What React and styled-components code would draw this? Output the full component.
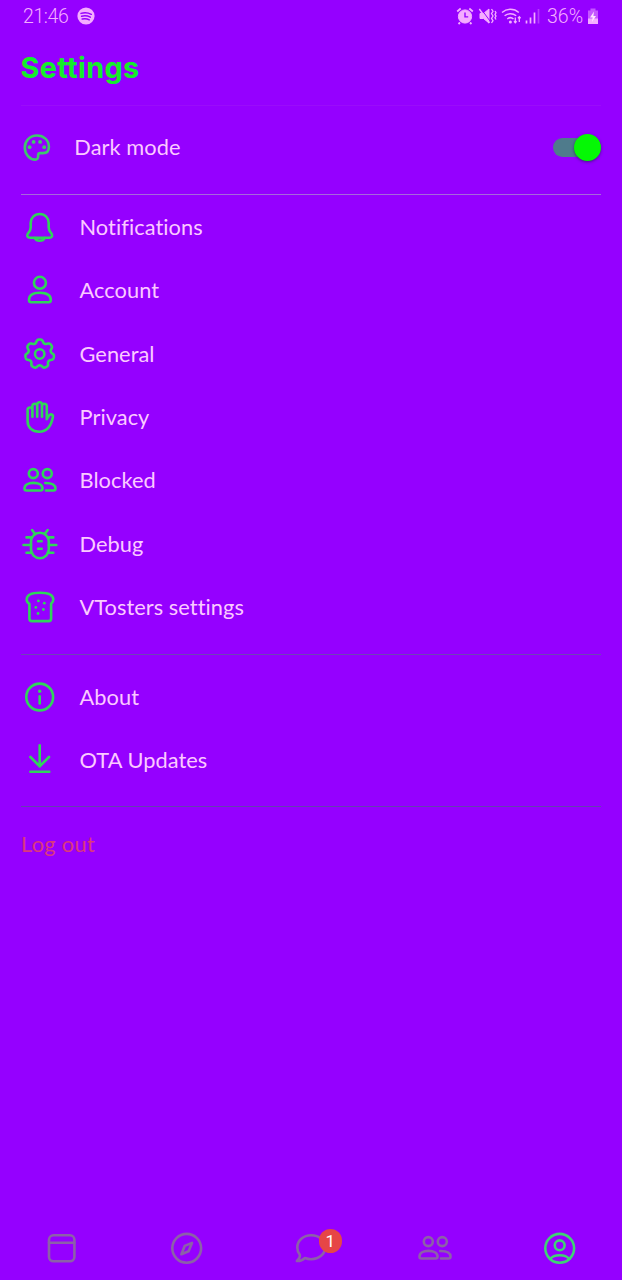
import React, { useState } from "react";
import styled, { createGlobalStyle } from "styled-components";

// seven rounded teeth around the centre of a 40x40 box
const gearPath = () => {
  const points = [];
  for (let i = 0; i < 140; i++) {
    const angle = (i / 140) * Math.PI * 2;
    const wave = Math.cos(7 * angle);
    const radius = 12.85 + 1.75 * Math.tanh(1.5 * wave + 0.3);
    const x = 20 + radius * Math.sin(angle);
    const y = 20 - radius * Math.cos(angle);
    points.push(`${x.toFixed(2)} ${y.toFixed(2)}`);
  }
  return `M${points.join("L")}Z`;
};

const people = (
  <>
    <circle cx="13.6" cy="13.6" r="4.5" />
    <circle cx="27.6" cy="13.6" r="4.5" />
    <path d="M4.8 28.600c0-3.700 3.800-5.700 9-5.700s9 2 9 5.700c0 1.300-.7 1.900-1.900 1.900H6.700c-1.200 0-1.900-.6-1.900-1.900z" />
    <path d="M25.600 23c5.600 0 10.200 1.700 10.200 5.600 0 1.300-.7 1.900-1.900 1.900H26.300" />
  </>
);

const icons = {
  palette: (
    <>
      <path d="M20.200 7.500C13 7.500 8.100 12.900 8.100 19.600c0 6.800 4.900 12 10.400 12 2 0 3-1.200 2.900-3.200v-1.200c0-1.300.8-2.100 2.200-2.100h2.600c3.800 0 6-2.300 6-6.200C32.200 12 27 7.500 20.200 7.500z" />
      <g fill="currentColor" stroke="none">
        <circle cx="12.9" cy="19.2" r="1.9" />
        <circle cx="16.9" cy="13.9" r="1.9" />
        <circle cx="23.4" cy="13.9" r="1.9" />
        <circle cx="27.5" cy="19.2" r="1.9" />
      </g>
    </>
  ),
  bell: (
    <>
      <path d="M20 7c-5.400 0-9 4-9 9v4.600c0 2.200-.8 3.500-2.300 5.200-2.200 2.500-1.200 4.900 1.300 4.900h20c2.500 0 3.500-2.400 1.300-4.900-1.500-1.700-2.300-3-2.300-5.200V16c0-5-3.600-9-9-9z" />
      <path d="M15.200 31c.7 1.900 2.400 2.700 4.800 2.700s4.100-.8 4.800-2.700" />
    </>
  ),
  user: (
    <>
      <circle cx="20.2" cy="12.8" r="6" />
      <path d="M9.300 30c0-4.700 4.300-7.200 10.900-7.200S31.100 25.300 31.100 30c0 1.500-.7 2.200-2.200 2.200H11.500c-1.500 0-2.200-.7-2.200-2.200z" />
    </>
  ),
  gear: (
    <>
      <path d={gearPath()} />
      <circle cx="20" cy="20" r="4.7" />
    </>
  ),
  hand: (
    <path d="M7.900 24V12.900a2.400 2.400 0 0 1 4.800 0v6.800V9.200a2.400 2.400 0 0 1 4.800 0v10.500V7.600a2.400 2.400 0 0 1 4.800 0v12.100V9.200a2.400 2.400 0 0 1 4.800 0v13l2.300-3.800c1.500-2.100 4.300-.8 3.800 1.600C31.600 28.500 28.300 34.700 19.500 34.700 12.500 34.700 7.900 30.500 7.900 24z" />
  ),
  people,
  bug: (
    <>
      <rect x="11.3" y="8.8" width="17.8" height="25.4" rx="8.9" />
      <path d="M12.400 6l2.600 3.500M28 6l-2.600 3.500M6.800 13.400h5.500M3.800 21h7.500M6.800 28.700h5.500M28.100 13.400h5.500M29.100 21h7.500M28.100 28.700h5.500M18.400 17.200h3.600M18.400 24.700h3.600" />
    </>
  ),
  toast: (
    <>
      <path d="M9.700 16.800C7.900 15.800 6.900 14.300 7 12.300 7.200 7.600 12.500 5.700 20.300 5.700s13.100 1.900 13.300 6.600c.1 2-.9 3.500-2.200 4.500v14.700c0 1.800-.8 2.600-2.600 2.600H12.300c-1.800 0-2.600-.8-2.600-2.600z" />
      <g fill="currentColor" stroke="none">
        <circle cx="18.7" cy="13.9" r="1.4" />
        <circle cx="24.6" cy="16.2" r="1.4" />
        <circle cx="16.1" cy="20.4" r="1.4" />
        <circle cx="23.7" cy="22.5" r="1.4" />
        <circle cx="18.3" cy="26.5" r="1.4" />
      </g>
    </>
  ),
  info: (
    <>
      <circle cx="20" cy="20" r="13.4" />
      <circle cx="20" cy="14.3" r="1.7" fill="currentColor" stroke="none" />
      <path d="M20 19.400v7" />
    </>
  ),
  download: <path d="M20 5.300v21.200M10.700 17l9.300 9.300 9.300-9.300M10.700 31.700h18.900" />,
  feed: (
    <>
      <rect x="7.3" y="7.3" width="25.4" height="26" rx="4.5" />
      <path d="M7.300 14.700h25.400" />
    </>
  ),
  compass: (
    <>
      <circle cx="20" cy="20.3" r="14.4" />
      <path d="M25.300 14.900l-3.400 8.300-7.200 3 3.300-8.300z" />
    </>
  ),
  chat: (
    <path d="M20.500 7.300c-7.900 0-13.900 5.200-13.900 12.200 0 3.100 1 5.400 2.500 7.300.5 2.200-.8 4.200-2.900 6.200 3.400.2 6.200-1.300 8.100-3 1.900.8 3.900 1.200 6.200 1.200 7.800 0 13.900-5 13.900-11.900S28.400 7.300 20.500 7.300z" />
  ),
  profile: (
    <>
      <circle cx="20" cy="20.3" r="14.4" />
      <circle cx="20" cy="17.3" r="4.9" />
      <path d="M10.400 31c2-2.500 5.400-3.800 9.600-3.800s7.600 1.300 9.600 3.800" />
    </>
  ),
};

const Icon = ({ name }) => (
  <Glyph viewBox="0.3 0 40 40">{icons[name]}</Glyph>
);

const mainItems = [
  { icon: "bell", label: "Notifications" },
  { icon: "user", label: "Account" },
  { icon: "gear", label: "General" },
  { icon: "hand", label: "Privacy" },
  { icon: "people", label: "Blocked" },
  { icon: "bug", label: "Debug" },
  { icon: "toast", label: "VTosters settings" },
];

const otherItems = [
  { icon: "info", label: "About" },
  { icon: "download", label: "OTA Updates" },
];

const tabs = [
  { icon: "feed" },
  { icon: "compass" },
  { icon: "chat", count: 1 },
  { icon: "people" },
  { icon: "profile" },
];

function StatusIcons() {
  return (
    <StatusGlyphs viewBox="0 0 86 20">
      {/* alarm */}
      <circle cx="9" cy="10.5" r="6.6" fill="currentColor" />
      <path d="M1.200 5.500l3.500-3M16.800 5.500l-3.500-3M4 16.500l-1.500 1.500M14 16.500l1.500 1.500" strokeWidth="1.8" />
      <path d="M9 6.500v4.400h3.200" stroke="#9500ff" strokeWidth="1.4" />
      {/* muted speaker, vibration */}
      <path d="M24 7.500h3.500l5.500-4.500v14l-5.500-4.500H24z" fill="currentColor" />
      <path d="M25.500 3.500l8.500 11.500" stroke="#9500ff" strokeWidth="1" />
      <path d="M23.300 3l10 14" strokeWidth="1.4" />
      <path d="M35.500 3l1.500 2.300-1.500 2.300 1.500 2.400-1.500 2.400 1.500 2.300-1.500 2.300M39 5l1 1.700-1 1.700 1 1.700-1 1.700 1 1.700" strokeWidth="1.3" />
      {/* wifi */}
      <path d="M46 6.500c4.800-4.200 12-4.200 16.800 0M48.600 9.800c3.300-2.900 8.300-2.900 11.600 0M51.300 13c1.800-1.600 4.400-1.600 6.200 0" strokeWidth="1.5" />
      <circle cx="54.4" cy="16" r="1.5" fill="currentColor" stroke="none" />
      <path d="M59.300 11.500v5M58 15.300l1.300 1.500 1.300-1.500M63.300 16v-5M62 12.300l1.300-1.500 1.300 1.500" strokeWidth="1.3" />
      {/* signal */}
      <path d="M70.500 17.500v-3M74.500 17.500v-6M78.500 17.500V6.500" strokeWidth="1.7" />
      <path d="M82.500 17.500V3" strokeWidth="1.7" opacity=".35" />
    </StatusGlyphs>
  );
}

function App() {
  const [dark, setDark] = useState(true);
  const [active, setActive] = useState(4);

  return (
    <Screen>
      <GlobalStyle />
      <StatusBar>
        <Clock>21:46</Clock>
        <Spotify viewBox="0 0 18 18">
          <circle cx="9" cy="9" r="8.6" fill="currentColor" />
          <path d="M4 6.400c3.400-1 7.200-.7 10.300.9M4.600 9.300c2.900-.8 6-.5 8.700.9M5.200 12c2.400-.6 4.900-.4 7.100.8" />
        </Spotify>
        <StatusIcons />
        <Percent>36%</Percent>
        <Battery viewBox="0 0 12 18">
          <path d="M3.500 1.500h5v2H11V17H1V3.500h2.500z" fill="currentColor" opacity=".5" />
          <path d="M1 11.500h10V17H1z" fill="currentColor" />
          <path d="M7 4.500L3 10.600h2.600L5 15l4-6H6.400z" fill="#ffe4ff" />
        </Battery>
      </StatusBar>
      <Header>
        <Title>Settings</Title>
      </Header>
      <Divider color="#9a0cfa" />
      <ThemeRow>
        <Icon name="palette" />
        <ThemeLabel>Dark mode</ThemeLabel>
        <Switch role="switch" aria-checked={dark} onClick={() => setDark(!dark)}>
          <Knob $on={dark} />
        </Switch>
      </ThemeRow>
      <Divider color="#a668dc" />
      <List>
        {mainItems.map((item) => (
          <Row key={item.label}>
            <Icon name={item.icon} />
            <Label>{item.label}</Label>
          </Row>
        ))}
      </List>
      <Divider color="#6f43b8" />
      <List $second>
        {otherItems.map((item) => (
          <Row key={item.label}>
            <Icon name={item.icon} />
            <Label>{item.label}</Label>
          </Row>
        ))}
      </List>
      <Divider color="#6540b0" />
      <LogOut>Log out</LogOut>
      <TabBar>
        {tabs.map((tab, index) => (
          <Tab
            key={index}
            $active={active === index}
            onClick={() => setActive(index)}
          >
            <Icon name={tab.icon} />
            {tab.count && <Badge>{tab.count}</Badge>}
          </Tab>
        ))}
      </TabBar>
    </Screen>
  );
}

export default App;

const GlobalStyle = createGlobalStyle`
  * {
    box-sizing: border-box;
  }
  body {
    margin: 0;
    background-color: #9500ff;
  }
`;

const Screen = styled.div`
  display: flex;
  flex-direction: column;
  width: 622px;
  height: 1280px;
  overflow: hidden;
  background-color: #9500ff;
  color: #fbcaff;
  font-family: Lato, "Open Sans", sans-serif;
`;

const StatusBar = styled.div`
  display: flex;
  align-items: center;
  height: 32px;
  padding: 0 23px;
  color: #f4adff;
  font-family: Roboto, sans-serif;
  font-size: 19.5px;
  font-weight: 300;
`;

const Clock = styled.span`
  width: 54px;
  letter-spacing: -0.4px;
`;

const Spotify = styled.svg`
  width: 18px;
  height: 18px;
  path {
    fill: none;
    stroke: #9500ff;
    stroke-width: 1.5;
    stroke-linecap: round;
  }
`;

const StatusGlyphs = styled.svg`
  width: 86px;
  height: 20px;
  margin-left: auto;
  fill: none;
  stroke: currentColor;
`;

const Percent = styled.span`
  width: 40px;
  margin-left: 5px;
`;

const Battery = styled.svg`
  width: 12px;
  height: 18px;
`;

const Header = styled.header`
  display: flex;
  align-items: center;
  height: 73px;
  padding: 0 20.5px 2px;
`;

const Title = styled.h1`
  margin: 0;
  color: #14ee2a;
  font-family: Inter, sans-serif;
  font-size: 28.8px;
  line-height: 36px;
  font-weight: 700;
  letter-spacing: 0.35px;
`;

const Divider = styled.div`
  flex: none;
  height: 1px;
  margin: 0 21px;
  background-color: ${(props) => props.color};
`;

const Glyph = styled.svg`
  flex: none;
  width: 40px;
  height: 40px;
  fill: none;
  stroke: currentColor;
  stroke-width: 2.6;
  stroke-linecap: round;
  stroke-linejoin: round;
`;

const ThemeRow = styled.div`
  display: flex;
  align-items: center;
  height: 88px;
  padding: 0 22px 5px 17px;
  svg {
    color: #3ec76c;
  }
`;

const Label = styled.span`
  margin-left: 19.5px;
  font-size: 21.8px;
  line-height: 28px;
  letter-spacing: 0.05px;
`;

const ThemeLabel = styled(Label)`
  margin-left: 17.3px;
  padding-bottom: 1px;
`;

const Switch = styled.button`
  display: flex;
  align-items: center;
  width: 47px;
  height: 19px;
  margin-left: auto;
  padding: 0;
  border: none;
  border-radius: 10px;
  background-color: #4f7b8c;
`;

const Knob = styled.span`
  flex: none;
  width: 27px;
  height: 27px;
  margin-left: ${(props) => (props.$on ? "21px" : "0")};
  border-radius: 50%;
  background-color: #05f805;
  box-shadow: 0 1px 3px rgba(40, 20, 90, 0.7);
`;

const List = styled.div`
  display: flex;
  flex-direction: column;
  height: ${(props) => (props.$second ? "151px" : "459px")};
  padding: ${(props) => (props.$second ? "10px" : "0")} 20px 0;
`;

const Row = styled.div`
  display: flex;
  flex: none;
  align-items: center;
  height: 63.45px;
  svg {
    color: #30d45a;
  }
`;

const LogOut = styled.div`
  padding: 23px 21px;
  color: #dc387c;
  font-size: 21.8px;
  line-height: 28px;
  letter-spacing: 0.3px;
`;

const TabBar = styled.nav`
  display: flex;
  height: 64px;
  margin-top: auto;
`;

const Tab = styled.div`
  position: relative;
  display: flex;
  flex: 1;
  align-items: center;
  justify-content: center;
  color: ${(props) => (props.$active ? "#3fd374" : "#8c60a8")};
`;

const Badge = styled.span`
  position: absolute;
  top: 13px;
  left: 70px;
  width: 23px;
  height: 24px;
  border-radius: 12px;
  background-color: #e64646;
  color: #fff;
  font-family: Roboto, sans-serif;
  font-size: 17px;
  line-height: 25px;
  text-align: center;
`;
